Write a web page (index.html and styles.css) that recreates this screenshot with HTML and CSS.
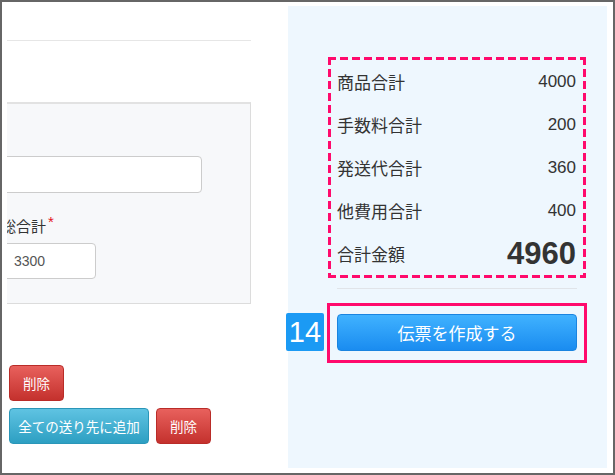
FILE: index.html
```html
<!DOCTYPE html>
<html lang="ja">
<head>
    <meta charset="UTF-8">
    <meta name="viewport" content="width=device-width, initial-scale=1.0">
    <title>伝票作成</title>
    <link rel="stylesheet" href="styles.css">
</head>
<body>
    <div class="frame">
        <div class="main">
            <hr class="rule">

            <div class="panel">
                <div class="panel-inner">
                    <input type="text" class="field field-wide">
                    <label class="field-label">総合計<span class="req">*</span></label>
                    <input type="text" class="field field-short" value="3300">
                </div>
            </div>

            <div class="actions">
                <div class="btn-row">
                    <button class="btn btn-danger">削除</button>
                </div>
                <div class="btn-row">
                    <button class="btn btn-info">全ての送り先に追加</button>
                    <button class="btn btn-danger">削除</button>
                </div>
            </div>
        </div>

        <aside class="summary">
            <div class="totals">
                <div class="total-row"><span class="total-label">商品合計</span><span class="total-value">4000</span></div>
                <div class="total-row"><span class="total-label">手数料合計</span><span class="total-value">200</span></div>
                <div class="total-row"><span class="total-label">発送代合計</span><span class="total-value">360</span></div>
                <div class="total-row"><span class="total-label">他費用合計</span><span class="total-value">400</span></div>
                <div class="total-row"><span class="total-label">合計金額</span><span class="total-value grand">4960</span></div>
            </div>

            <hr class="summary-rule">

            <div class="submit-box">
                <span class="step">14</span>
                <button class="btn btn-primary">伝票を作成する</button>
            </div>
        </aside>
    </div>
</body>
</html>
```

FILE: styles.css
```css
* {
    box-sizing: border-box;
}
body {
    margin: 0;
    font-family: "Liberation Sans", "Noto Sans CJK JP", sans-serif;
    color: #333;
    background-color: #fff;
}
.frame {
    width: 615px;
    height: 475px;
    border: 2px solid #666;
    padding: 4px 6px 5px 5px;
    display: flex;
    gap: 37px;
    overflow: hidden;
}

/* left column, cut off at its left edge */
.main {
    width: 244px;
    flex-shrink: 0;
    overflow: hidden;
}
.rule {
    margin: 34px 0 0;
    border: none;
    border-top: 1px solid #e6e6e6;
}
.panel {
    margin: 61px 0 0 -22px;
    background-color: #f7f8fa;
    border: 1px solid #dcdcdc;
    border-top: 2px solid #e2e2e2;
    padding: 52px 15px 24px 15px;
}
.panel-inner {
    display: flex;
    flex-direction: column;
    align-items: flex-start;
}
.field {
    height: 37px;
    border: 1px solid #cccccc;
    border-radius: 4px;
    background-color: #fff;
    padding: 0 12px;
    font-family: "Liberation Sans", sans-serif;
    font-size: 14px;
    color: #555;
}
.field-wide {
    width: 201px;
}
.field-short {
    width: 95px;
    height: 36px;
}
.field-label {
    margin: 24px 0 6px;
    font-size: 15px;
    line-height: 20px;
    color: #333;
}
.req {
    color: #e4151b;
    font-size: 15px;
    position: relative;
    top: -5px;
    margin-left: 2px;
}

.actions {
    margin: 61px 0 0 2px;
    display: flex;
    flex-direction: column;
    gap: 7px;
}
.btn-row {
    display: flex;
    gap: 7px;
}
.btn {
    height: 36px;
    border-radius: 4px;
    color: #fff;
    font-family: "Noto Sans CJK JP", sans-serif;
    font-size: 13.5px;
    cursor: pointer;
    padding: 0;
}
.btn-danger {
    width: 55px;
    background: linear-gradient(#e8615d, #c4312d);
    border: 1px solid #b92c28;
}
.btn-info {
    width: 140px;
    background: linear-gradient(#5fc3e2, #2d9fc2);
    border: 1px solid #2a96b8;
}

/* right summary panel */
.summary {
    width: 319px;
    flex-shrink: 0;
    background-color: #eef7fe;
    padding: 51px 21px 0 40px;
}
/* long dashes drawn with gradients, the browser's dashed border is too short */
.totals {
    padding: 3px 10px 3px 9px;
    background:
        repeating-linear-gradient(90deg, #ff0a6c 0 8px, transparent 8px 12px) top left / 100% 3px no-repeat,
        repeating-linear-gradient(90deg, #ff0a6c 0 8px, transparent 8px 12px) bottom left / 100% 3px no-repeat,
        repeating-linear-gradient(180deg, #ff0a6c 0 8px, transparent 8px 12px) top left / 3px 100% no-repeat,
        repeating-linear-gradient(180deg, #ff0a6c 0 8px, transparent 8px 12px) top right / 3px 100% no-repeat;
}
.total-row {
    height: 43px;
    display: flex;
    align-items: center;
    justify-content: space-between;
}
.total-label {
    font-family: "Noto Sans CJK JP", sans-serif;
    font-size: 17px;
    line-height: 20px;
    color: #333;
}
.total-value {
    font-size: 17px;
    line-height: 20px;
    color: #333;
}
.total-value.grand {
    font-size: 31px;
    font-weight: bold;
    line-height: 34px;
}
.summary-rule {
    margin: 10px 9px 14px;
    border: none;
    border-top: 1px solid #e0e4e9;
}
.submit-box {
    position: relative;
    margin: 0 -1px;
    border: 3px solid #ff0a6c;
    padding: 8px 7px 9px;
}
.btn-primary {
    display: block;
    width: 100%;
    height: 37px;
    font-size: 17px;
    background: linear-gradient(#40b2ff, #1a8cf0);
    border: 1px solid #1a84e0;
}
.step {
    position: absolute;
    left: -44px;
    top: 7px;
    width: 38px;
    height: 38px;
    border-radius: 2px;
    background-color: #1b9af4;
    color: #fff;
    font-size: 29px;
    line-height: 38px;
    text-align: center;
}
```
